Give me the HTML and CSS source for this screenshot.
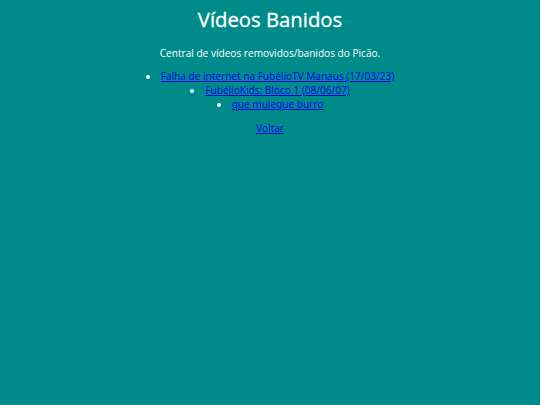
FILE: index.html
```html
<!DOCTYPE html>
<html lang="pt-BR">
<head>
<meta charset="utf-8">
<title>Vídeos Banidos</title>
<link rel="stylesheet" href="styles.css">
</head>
<body>
<div class="page">
<h1 class="title">Vídeos Banidos</h1>
<p class="intro">Central de vídeos removidos/banidos do Picão.</p>
<ul class="videos">
<li><a href="#">Falha de internet na FubélioTV Manaus (17/03/23)</a></li>
<li><a href="#">FubélioKids: Bloco 1 (08/06/07)</a></li>
<li><a href="#">que muleque burro</a></li>
</ul>
<p class="back"><a href="#">Voltar</a></p>
</div>
</body>
</html>
```
FILE: styles.css
```css
html, body {
  margin: 0;
  background: #008b8b;
}
body {
  color: #fff;
  font-family: "Open Sans", sans-serif;
  font-size: 10.1px;
  text-align: center;
}
.page {
  padding: 0 8px;
  display: flow-root;
}
.title {
  font-size: 20.3px;
  font-weight: 400;
  -webkit-text-stroke: 0.3px #fff;
  margin: 5px 0 12.5px;
}
.intro {
  margin: 0 0 9px;
}
.videos {
  list-style: disc inside;
  padding: 0;
  margin: 0 0 10px;
}
.videos li {
  line-height: 14px;
}
.videos a, .back a {
  color: #0000ee;
}
.back {
  margin: 0;
}
```
